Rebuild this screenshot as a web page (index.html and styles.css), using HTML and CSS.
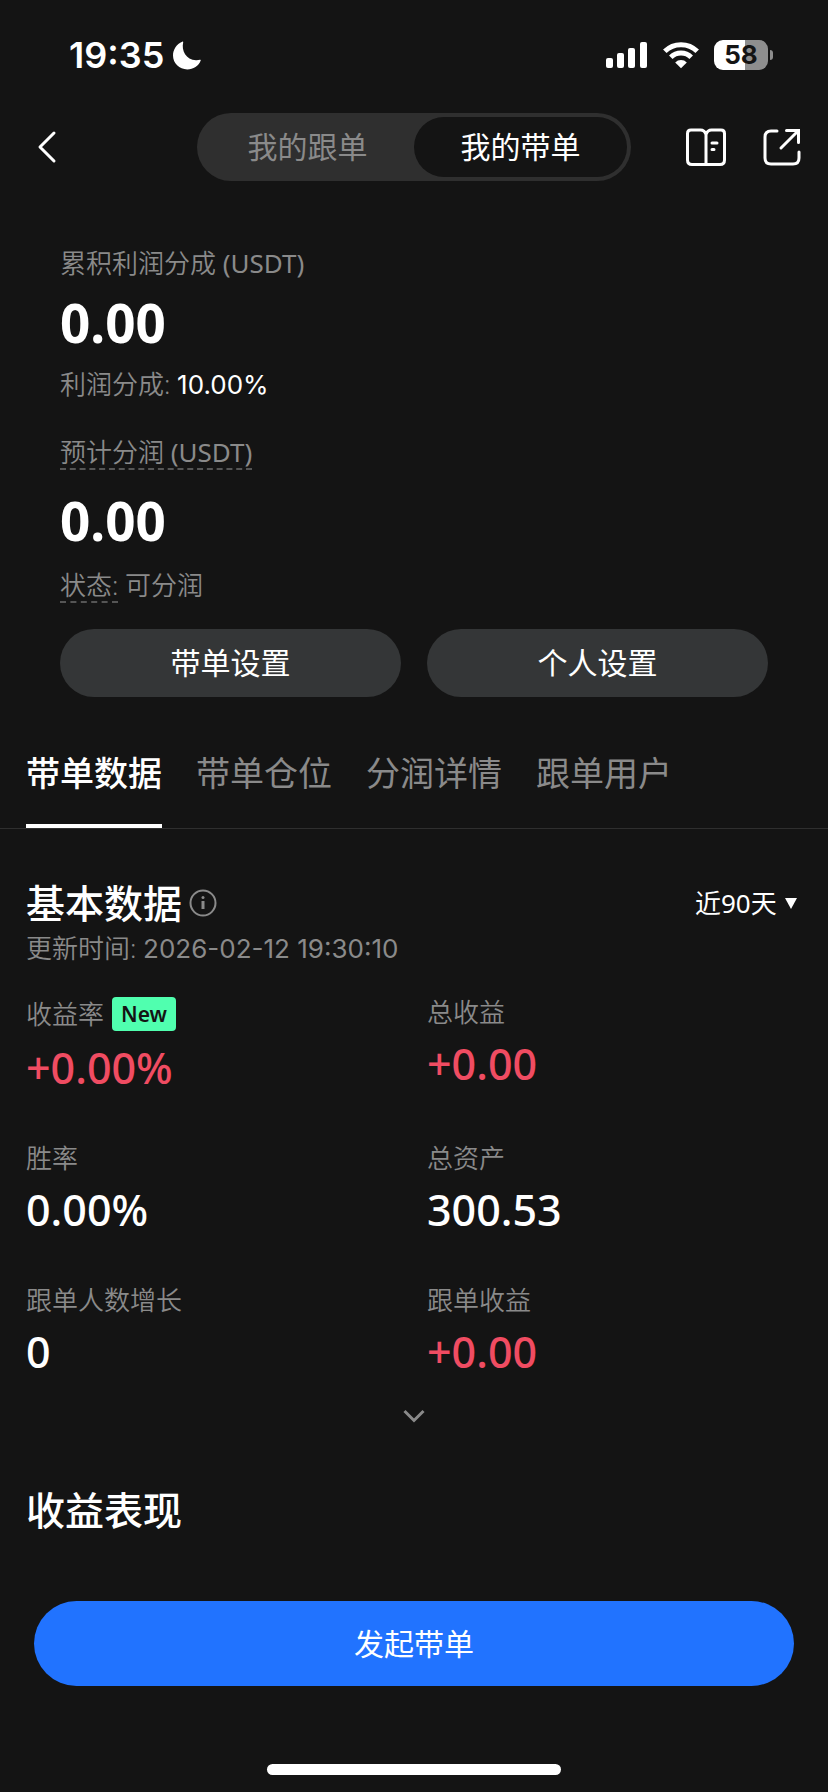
FILE: index.html
```html
<!DOCTYPE html>
<html lang="zh-CN">
<head>
    <meta charset="UTF-8">
    <meta name="viewport" content="width=device-width, initial-scale=1.0">
    <title>我的带单</title>
    <link rel="stylesheet" href="styles.css">
</head>
<body>
    <div class="app">
        <div class="status-bar">
            <div class="status-left">
                <span class="clock">19:35</span>
                <svg class="moon" width="29" height="29" viewBox="0 0 29 29">
                    <path d="M11.2 1.2C9.2 9.8 14 18.6 24 19.2c1.600.1 2.800-.2 3.900-.5.600-.2 1 .3.800.9C26.700 25 21.300 28.500 15.300 28.500 7.300 28.500 1 22.300 1 14.600 1 8.400 4.600 3 10.200.7c.7-.3 1.100 0 1 .5Z" fill="#fff"/>
                </svg>
            </div>
            <div class="status-right">
                <svg width="43" height="28" viewBox="0 0 43 28" fill="#fff">
                    <rect x="1" y="17" width="7" height="10" rx="2"/>
                    <rect x="12" y="12" width="7" height="15" rx="2"/>
                    <rect x="23" y="7" width="7" height="20" rx="2"/>
                    <rect x="35" y="1" width="7" height="26" rx="2"/>
                </svg>
                <svg width="38" height="28" viewBox="0 0 38 28">
                    <g fill="none" stroke="#fff" stroke-width="5">
                        <path d="M2.800 10.300a23 23 0 0 1 32.400 0"/>
                        <path d="M8.800 16.300a14.500 14.500 0 0 1 20.400 0"/>
                    </g>
                    <path d="M19 27.300l-5.800-5.800a8.200 8.200 0 0 1 11.600 0Z" fill="#fff"/>
                </svg>
                <div class="battery"><span>58</span></div>
            </div>
        </div>

        <header class="top-nav">
            <button class="icon-btn back" aria-label="返回">
                <svg width="20" height="34" viewBox="0 0 20 34"><path d="M17 3L3 17l14 14" fill="none" stroke="#fff" stroke-width="3" stroke-linecap="round" stroke-linejoin="round"/></svg>
            </button>
            <div class="switch">
                <button>我的跟单</button>
                <button class="active">我的带单</button>
            </div>
            <div class="nav-actions">
                <button class="icon-btn" aria-label="指南">
                    <svg width="42" height="40" viewBox="0 0 42 40" fill="none" stroke="#fff" stroke-width="3" stroke-linecap="round" stroke-linejoin="round">
                        <path d="M21 7.500C20 4.500 18 3 15.500 3H6Q2.500 3 2.500 6.500V33Q2.500 37.500 7 37.500H35Q39.500 37.500 39.500 33V6.500Q39.500 3 36 3H26.500C24 3 22 4.500 21 7.500ZM21 7.500V37"/>
                        <path d="M27 16h5M27 22.500h2"/>
                    </svg>
                </button>
                <button class="icon-btn" aria-label="分享">
                    <svg width="40" height="40" viewBox="0 0 40 40" fill="none" stroke="#fff" stroke-width="3" stroke-linecap="round">
                        <path d="M15 4H9Q3 4 3 10V31Q3 37 9 37H31Q37 37 37 31V25"/>
                        <path d="M19 21L36 4M24.500 3.500H36.500V15.500"/>
                    </svg>
                </button>
            </div>
        </header>

        <section class="profile">
            <p class="label">累积利润分成 <span class="unit">(USDT)</span></p>
            <p class="amount">0.00</p>
            <p class="label">利润分成: <span class="num rate">10.00%</span></p>
            <p class="label estimate"><span class="hint">预计分润 <span class="unit">(USDT)</span></span></p>
            <p class="amount">0.00</p>
            <p class="label"><span class="hint">状态:</span> 可分润</p>
            <div class="profile-actions">
                <button>带单设置</button>
                <button>个人设置</button>
            </div>
        </section>

        <nav class="tabs">
            <a href="#data" class="active">带单数据</a>
            <a href="#positions">带单仓位</a>
            <a href="#profit">分润详情</a>
            <a href="#users">跟单用户</a>
        </nav>

        <main id="data">
            <div class="section-head">
                <h2>基本数据</h2>
                <button class="icon-btn info" aria-label="说明">
                    <svg width="30" height="30" viewBox="0 0 30 30">
                        <circle cx="15" cy="15" r="12.500" fill="none" stroke="#8a8a8a" stroke-width="2"/>
                        <circle cx="15" cy="9.500" r="1.500" fill="#8a8a8a"/>
                        <path d="M15 13v8" stroke="#8a8a8a" stroke-width="3"/>
                    </svg>
                </button>
                <div class="range">
                    <select aria-label="时间范围">
                        <option>近90天</option>
                    </select>
                    <svg width="12" height="12" viewBox="0 0 12 12"><path d="M0 1h12L6 12Z" fill="#fff"/></svg>
                </div>
            </div>
            <p class="label">更新时间: <span class="num">2026-02-12 19:30:10</span></p>

            <dl class="stats">
                <div>
                    <dt>收益率 <span class="badge">New</span></dt>
                    <dd class="red">+0.00%</dd>
                </div>
                <div>
                    <dt>总收益</dt>
                    <dd class="red">+0.00</dd>
                </div>
                <div>
                    <dt>胜率</dt>
                    <dd>0.00%</dd>
                </div>
                <div>
                    <dt>总资产</dt>
                    <dd>300.53</dd>
                </div>
                <div>
                    <dt>跟单人数增长</dt>
                    <dd>0</dd>
                </div>
                <div>
                    <dt>跟单收益</dt>
                    <dd class="red">+0.00</dd>
                </div>
            </dl>

            <button class="icon-btn expand" aria-label="展开">
                <svg width="24" height="16" viewBox="0 0 24 16"><path d="M2.500 3l9.500 9.500L21.500 3" fill="none" stroke="#8a8a8a" stroke-width="3"/></svg>
            </button>

            <h2>收益表现</h2>
        </main>

        <footer>
            <button class="submit">发起带单</button>
            <div class="home-indicator"></div>
        </footer>
    </div>
</body>
</html>
```
FILE: styles.css
```css
* {
    box-sizing: border-box;
    margin: 0;
    padding: 0;
}

body {
    background-color: #141414;
    color: #fff;
    font-family: "Noto Sans", "Noto Sans CJK SC", sans-serif;
    font-size: 26px;
    line-height: 30px;
}

button,
select {
    border: none;
    background: none;
    color: inherit;
    font: inherit;
    cursor: pointer;
}

svg {
    display: block;
}

.app {
    display: flex;
    flex-direction: column;
    min-height: 100vh;
}

/* status bar */
.status-bar {
    display: flex;
    justify-content: space-between;
    padding: 34px 57px 0 69px;
}

.status-left,
.status-right {
    display: flex;
    align-items: center;
    height: 42px;
}

.status-left {
    gap: 8px;
}

.status-right {
    gap: 14px;
}

.clock {
    font-family: Inter, sans-serif;
    font-size: 36px;
    font-weight: 600;
}

.battery {
    position: relative;
    width: 54px;
    height: 30px;
    margin-right: 3px;
    border-radius: 9px;
    background: linear-gradient(to right, #fff 58%, #8e8e8e 58%);
    color: #141414;
    font-family: Inter, sans-serif;
    font-weight: 700;
    text-align: center;
}

.battery::after {
    content: "";
    position: absolute;
    top: 10px;
    right: -5px;
    width: 3px;
    height: 10px;
    border-radius: 0 4px 4px 0;
    background-color: #8e8e8e;
}

/* top navigation */
.top-nav {
    display: grid;
    grid-template-columns: 1fr 434px 1fr;
    align-items: center;
    margin-top: 37px;
    padding: 0 26px;
}

.back {
    justify-self: start;
    margin-left: 11px;
}

.switch {
    display: flex;
    height: 68px;
    padding: 4px;
    border-radius: 34px;
    background-color: #2f2f2f;
}

.switch button {
    flex: 1;
    border-radius: 30px;
    color: #8a8a8a;
    font-size: 30px;
}

.switch .active {
    background-color: #141414;
    color: #fff;
}

.nav-actions {
    display: flex;
    justify-content: flex-end;
    gap: 35px;
}

/* profit summary */
.profile {
    padding: 67px 60px 0;
}

.label {
    color: #8a8a8a;
    font-weight: 350;
}

.unit {
    font-weight: 400;
}

.num {
    font-family: Inter, sans-serif;
    font-weight: 400;
    line-height: 1;
}

.rate {
    color: #fff;
}

.amount {
    margin: 15px 0 16px;
    font-size: 53px;
    font-weight: 700;
    line-height: 60px;
}

.estimate {
    margin: 38px 0 21px;
}

.estimate + .amount {
    margin-bottom: 19px;
}

.hint {
    display: inline-block;
    padding-bottom: 1px;
    border-bottom: 2px dashed #555;
}

.profile-actions {
    display: flex;
    gap: 26px;
    margin-top: 26px;
}

.profile-actions button {
    flex: 1;
    height: 68px;
    border-radius: 34px;
    background-color: #343637;
    font-size: 30px;
}

/* tabs */
.tabs {
    display: flex;
    gap: 34px;
    margin-top: 56px;
    padding: 0 26px;
    border-bottom: 1px solid #2f2f2f;
}

.tabs a {
    padding-bottom: 31px;
    border-bottom: 4px solid transparent;
    color: #8a8a8a;
    font-size: 34px;
    line-height: 40px;
    text-decoration: none;
}

.tabs .active {
    border-color: #fff;
    color: #fff;
    font-weight: 500;
}

/* data section */
main {
    padding: 52px 26px 0;
}

h2 {
    font-size: 39px;
    font-weight: 500;
    line-height: 44px;
}

.section-head {
    display: flex;
    align-items: center;
    margin-bottom: 8px;
}

.info {
    margin-left: 6px;
}

.range {
    display: flex;
    align-items: center;
    gap: 8px;
    margin-left: auto;
    padding-right: 5px;
}

.range select {
    appearance: none;
    font-weight: 400;
}

.stats {
    display: grid;
    grid-template-columns: 1fr 1fr;
    gap: 50px 26px;
    margin-top: 34px;
}

.stats dt {
    display: flex;
    align-items: center;
    gap: 8px;
    color: #8a8a8a;
    font-weight: 350;
}

.stats dd {
    margin-top: 12px;
    font-size: 43px;
    font-weight: 500;
    line-height: 50px;
}

.stats .red {
    color: #f04c62;
}

.badge {
    padding: 0 9px;
    border-radius: 4px;
    background-color: #50ffaf;
    color: #141414;
    font-size: 21px;
    font-weight: 600;
    line-height: 34px;
}

.expand {
    display: block;
    margin: 31px auto 64px;
}

/* bottom action */
footer {
    margin-top: auto;
    padding: 60px 34px 17px;
}

.submit {
    width: 100%;
    height: 85px;
    border-radius: 43px;
    background-color: #2173ff;
    font-size: 30px;
}

.home-indicator {
    width: 294px;
    height: 11px;
    margin: 78px auto 0;
    border-radius: 6px;
    background-color: #fff;
}
```
